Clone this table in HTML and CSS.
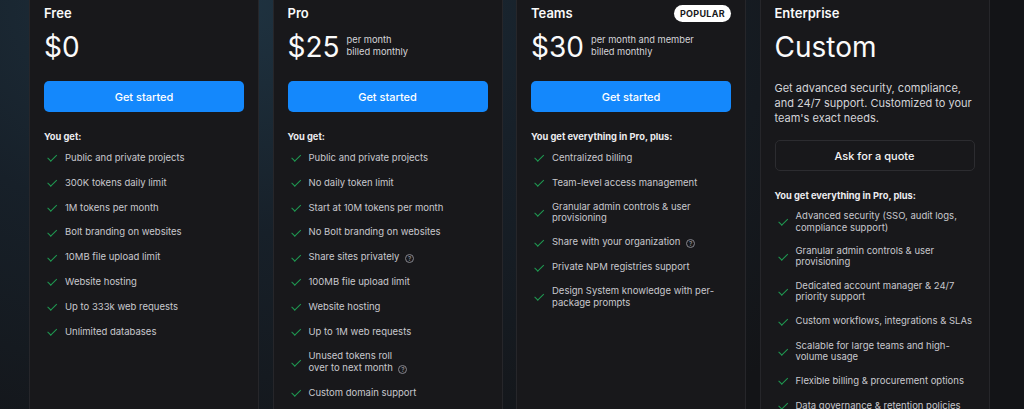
FILE: index.html
```html
<!DOCTYPE html>
<html lang="en">
<head>
  <meta charset="UTF-8" />
  <meta name="viewport" content="width=device-width, initial-scale=1.0" />
  <title>Pricing</title>
  <link rel="stylesheet" href="styles.css">
</head>
<body>

  <div class="pricing">

    <div class="plan">
      <div class="plan-head">
        <h2>Free</h2>
      </div>
      <div class="price">
        <span class="amount">$0</span>
      </div>
      <button class="btn btn-primary">Get started</button>
      <p class="list-title">You get:</p>
      <ul class="features">
        <li><span>Public and private projects</span></li>
        <li><span>300K tokens daily limit</span></li>
        <li><span>1M tokens per month</span></li>
        <li><span>Bolt branding on websites</span></li>
        <li><span>10MB file upload limit</span></li>
        <li><span>Website hosting</span></li>
        <li><span>Up to 333k web requests</span></li>
        <li><span>Unlimited databases</span></li>
      </ul>
    </div>

    <div class="plan">
      <div class="plan-head">
        <h2>Pro</h2>
      </div>
      <div class="price">
        <span class="amount">$25</span>
        <span class="per">per month<br>billed monthly</span>
      </div>
      <button class="btn btn-primary">Get started</button>
      <p class="list-title">You get:</p>
      <ul class="features">
        <li><span>Public and private projects</span></li>
        <li><span>No daily token limit</span></li>
        <li><span>Start at 10M tokens per month</span></li>
        <li><span>No Bolt branding on websites</span></li>
        <li><span>Share sites privately <i class="help">?</i></span></li>
        <li><span>100MB file upload limit</span></li>
        <li><span>Website hosting</span></li>
        <li><span>Up to 1M web requests</span></li>
        <li><span>Unused tokens roll<br>over to next month <i class="help">?</i></span></li>
        <li><span>Custom domain support</span></li>
      </ul>
    </div>

    <div class="plan">
      <div class="plan-head">
        <h2>Teams</h2>
        <span class="badge">POPULAR</span>
      </div>
      <div class="price">
        <span class="amount">$30</span>
        <span class="per">per month and member<br>billed monthly</span>
      </div>
      <button class="btn btn-primary">Get started</button>
      <p class="list-title">You get everything in Pro, plus:</p>
      <ul class="features">
        <li><span>Centralized billing</span></li>
        <li><span>Team-level access management</span></li>
        <li><span>Granular admin controls &amp; user<br>provisioning</span></li>
        <li><span>Share with your organization <i class="help">?</i></span></li>
        <li><span>Private NPM registries support</span></li>
        <li><span>Design System knowledge with per-<br>package prompts</span></li>
      </ul>
    </div>

    <div class="plan">
      <div class="plan-head">
        <h2>Enterprise</h2>
      </div>
      <div class="price">
        <span class="amount">Custom</span>
      </div>
      <p class="desc">Get advanced security, compliance, and 24/7 support. Customized to your team's exact needs.</p>
      <button class="btn btn-outline">Ask for a quote</button>
      <p class="list-title">You get everything in Pro, plus:</p>
      <ul class="features">
        <li><span>Advanced security (SSO, audit logs,<br>compliance support)</span></li>
        <li><span>Granular admin controls &amp; user<br>provisioning</span></li>
        <li><span>Dedicated account manager &amp; 24/7<br>priority support</span></li>
        <li><span>Custom workflows, integrations &amp; SLAs</span></li>
        <li><span>Scalable for large teams and high-<br>volume usage</span></li>
        <li><span>Flexible billing &amp; procurement options</span></li>
        <li><span>Data governance &amp; retention policies</span></li>
      </ul>
    </div>

  </div>

</body>
</html>
```

FILE: styles.css
```css
* {
  box-sizing: border-box;
}

body {
  margin: 0;
  height: 409px;
  overflow: hidden;
  font-family: Inter, "Noto Sans", sans-serif;
  color: #e4e4e7;
  background-color: #131417;
  background-image: radial-gradient(ellipse 760px 520px at 22% 0%, #1f3341 0%, #172029 45%, #131417 100%);
}

.pricing {
  display: grid;
  grid-template-columns: repeat(4, 230px);
  column-gap: 13.5px;
  padding-left: 29px;
  margin-top: -16px;
}

.plan {
  height: 460px;
  padding: 19px 14px 0;
  background-color: #18181b;
  border: 1px solid #26262a;
  border-radius: 8px;
}

.plan-head {
  display: flex;
  justify-content: space-between;
  align-items: center;
  height: 18px;
}

.plan-head h2 {
  margin: 0;
  font-size: 13px;
  font-weight: 600;
  line-height: 18px;
  color: #fafafa;
}

.badge {
  padding: 3px 6px;
  border-radius: 999px;
  background-color: #fff;
  color: #18181b;
  font-size: 9px;
  font-weight: 700;
  line-height: 11px;
  letter-spacing: 0.3px;
}

.price {
  display: flex;
  align-items: center;
  gap: 7px;
  height: 34px;
  margin-top: 8px;
}

.amount {
  font-size: 28px;
  line-height: 34px;
  font-weight: 400;
  color: #fafafa;
}

.per {
  margin-top: -3px;
  font-size: 9.3px;
  line-height: 12px;
  color: #d4d4d8;
}

.desc {
  margin: 17px 0 0;
  font-size: 11px;
  line-height: 15px;
  color: #d4d4d8;
}

.btn {
  display: block;
  width: 100%;
  height: 31px;
  margin-top: 17px;
  border-radius: 5px;
  font-family: inherit;
  font-size: 11px;
  font-weight: 500;
  cursor: pointer;
}

.btn-primary {
  border: none;
  background-color: #1488fc;
  color: #fff;
}

.btn-outline {
  margin-top: 14px;
  border: 1px solid #2c2c30;
  background-color: transparent;
  color: #f4f4f5;
}

.list-title {
  margin: 18px 0 0;
  font-size: 9.3px;
  font-weight: 700;
  line-height: 14px;
  color: #ececef;
}

.features {
  display: flex;
  flex-direction: column;
  gap: 11.7px;
  list-style: none;
  margin: 7px 0 0;
  padding: 0 0 0 2px;
}

.features li {
  display: flex;
  align-items: center;
  gap: 8px;
  min-height: 13.2px;
  font-size: 9.5px;
  line-height: 11.6px;
  color: #c8c8ce;
}

.features li::before {
  content: "";
  flex: none;
  width: 4px;
  height: 8px;
  margin: 0 3px;
  border-right: 1.1px solid #1f9a52;
  border-bottom: 1.1px solid #1f9a52;
  transform: rotate(45deg) translateY(-1px);
}

.help {
  display: inline-flex;
  justify-content: center;
  align-items: center;
  width: 9px;
  height: 9px;
  margin-left: 3px;
  border: 1px solid #85858d;
  border-radius: 50%;
  color: #85858d;
  font-size: 6px;
  font-style: normal;
  font-weight: 600;
  line-height: 1;
  vertical-align: -1px;
}
```
